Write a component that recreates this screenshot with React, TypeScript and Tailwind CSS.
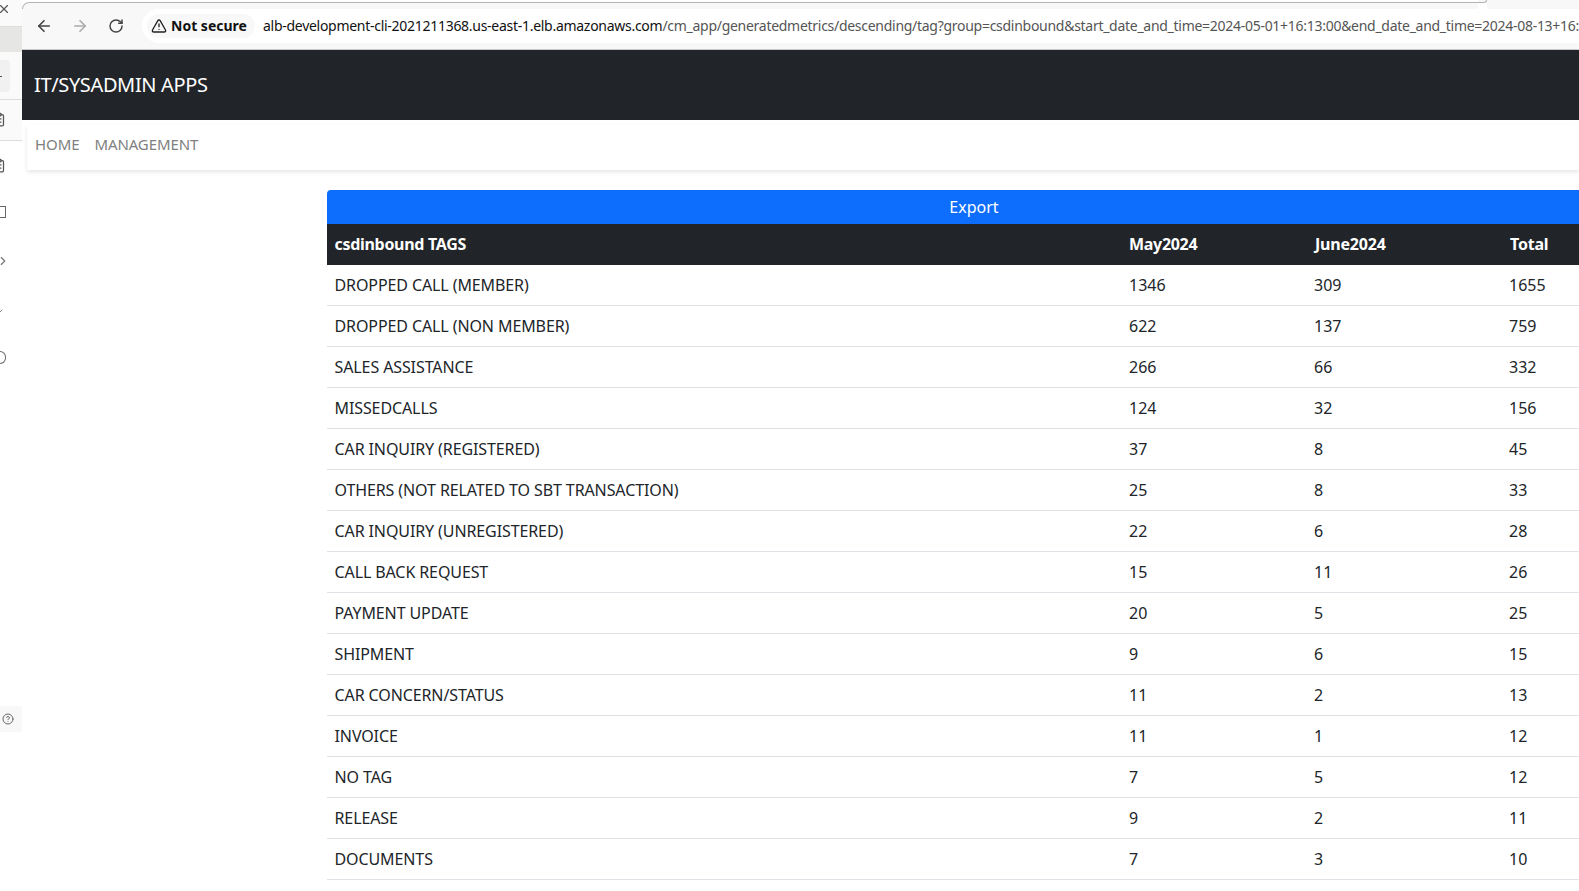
import React from "react";
import { ArrowLeft, ArrowRight, RotateCw, TriangleAlert, X, CircleHelp, ChevronRight, ClipboardList, Check } from "lucide-react";

const rows: [string, number, number, number][] = [
  ["DROPPED CALL (MEMBER)", 1346, 309, 1655],
  ["DROPPED CALL (NON MEMBER)", 622, 137, 759],
  ["SALES ASSISTANCE", 266, 66, 332],
  ["MISSEDCALLS", 124, 32, 156],
  ["CAR INQUIRY (REGISTERED)", 37, 8, 45],
  ["OTHERS (NOT RELATED TO SBT TRANSACTION)", 25, 8, 33],
  ["CAR INQUIRY (UNREGISTERED)", 22, 6, 28],
  ["CALL BACK REQUEST", 15, 11, 26],
  ["PAYMENT UPDATE", 20, 5, 25],
  ["SHIPMENT", 9, 6, 15],
  ["CAR CONCERN/STATUS", 11, 2, 13],
  ["INVOICE", 11, 1, 12],
  ["NO TAG", 7, 5, 12],
  ["RELEASE", 9, 2, 11],
  ["DOCUMENTS", 7, 3, 10],
];

function Sidebar() {
  return (
    <aside className="w-[22px] shrink-0 bg-white flex flex-col overflow-hidden">
      <div className="h-[27px] bg-[#fafafa] border-b border-[#dddddd] pt-[2px]">
        <X size={14} className="-ml-[3px] text-[#555555]" />
      </div>
      <div className="h-[25px] bg-[#e6e6e4]" />
      <div className="h-[48px] bg-[#fafafa] border-b border-[#dddddd] pt-[8px]">
        <div className="h-[32px] w-[10px] rounded-r bg-[#f1f1f1] flex items-center">
          <span className="block w-[2px] h-px bg-[#555555]" />
        </div>
      </div>
      <div className="h-[41px] bg-[#fafafa] border-b border-[#dddddd] pt-[12px]">
        <ClipboardList size={15} className="-ml-[9px] text-[#555555]" />
      </div>
      <div className="h-[46px] pt-[17px]">
        <ClipboardList size={15} className="-ml-[9px] text-[#555555]" />
      </div>
      <div className="h-[50px] pt-[19px]">
        <div className="w-[6px] h-[12px] border border-l-0 border-[#666666]" />
      </div>
      <div className="h-[50px] pt-[17px]">
        <ChevronRight size={14} className="-ml-[4px] text-[#777777]" />
      </div>
      <div className="h-[50px] pt-[20px]">
        <Check size={12} className="-ml-[8px] text-[#888888]" />
      </div>
      <div className="h-[369px] pt-[14px]">
        <div className="w-[6px] h-[13px] rounded-r-full border border-l-0 border-[#666666]" />
      </div>
      <div className="h-[26px] bg-[#f8f8f8] flex items-center pl-[2px]">
        <CircleHelp size={12} className="text-[#666666]" />
      </div>
    </aside>
  );
}

function BrowserBar() {
  return (
    <div className="h-[50px] bg-[#f8f8f8] border-b border-[#c8c8c8]">
      <div className="h-[9px] flex bg-white">
        <div className="w-[1456px] h-[7px] mt-[2px] rounded-tl-[8px] border-t border-l border-[#b4b4b4] bg-[#f8f8f8]" />
        <div className="w-[9px] h-[3px] rounded-br-[6px] border-b border-r border-[#b4b4b4] bg-[#f8f8f8]" />
        <div className="flex-1 bg-[#f8f8f8]" />
      </div>
      <div className="h-[40px] flex items-start">
        <div className="w-[44px] h-[34px] shrink-0 flex items-center justify-center">
          <ArrowLeft size={18} strokeWidth={2.2} className="text-[#444444]" />
        </div>
        <div className="w-[28px] h-[34px] shrink-0 flex items-center justify-center">
          <ArrowRight size={18} strokeWidth={2.2} className="text-[#aaaaaa]" />
        </div>
        <div className="w-[44px] h-[34px] shrink-0 flex items-center justify-center">
          <RotateCw size={16} strokeWidth={2.2} className="text-[#444444]" />
        </div>
        <div className="ml-[4px] flex-1 min-w-0 h-[34px] bg-white rounded-l-full flex items-center pl-[5px] overflow-hidden">
          <div className="flex items-center h-[24px] w-[108px] shrink-0 pl-[4px] rounded-full bg-[#f8f8f8] gap-[4px] whitespace-nowrap">
            <TriangleAlert size={16} strokeWidth={2} className="text-[#222222] shrink-0" />
            <span className="text-[14px] leading-[20px] pb-[1px] font-bold text-[#111111]">Not secure</span>
          </div>
          <div className="whitespace-nowrap text-[14px] leading-[20px] pb-[1px] pl-[8px]">
            <span className="text-[#111111] tracking-[-0.28px]">alb-development-cli-2021211368.us-east-1.elb.amazonaws.com</span>
            <span className="text-[#555555] tracking-[-0.28px]">/cm_app/generatedmetrics/descending/tag?group=csdinbound&amp;start_date_and_time=2024-05-01+16:13:00&amp;end_date_and_time=2024-08-13+16:13:00</span>
          </div>
        </div>
      </div>
    </div>
  );
}

export default function App() {
  return (
    <div className="h-[891px] w-[1579px] overflow-hidden flex bg-white font-['Noto_Sans',sans-serif] text-[16px] text-[#212529]">
      <Sidebar />
      <main className="flex-1 min-w-0">
        <BrowserBar />
        <header className="h-[70px] bg-[#212529] flex items-center pl-[12px]">
          <span className="text-[20px] text-white tracking-[-0.36px]">IT/SYSADMIN APPS</span>
        </header>
        <nav className="h-[45px] mt-[5px] ml-[5px] bg-white shadow-[0_2px_4px_rgba(0,0,0,0.1)] flex items-center pl-[8px] pb-[6px] gap-[15px] text-[15px] tracking-[-0.1px] text-[#808080]">
          <span>HOME</span>
          <span>MANAGEMENT</span>
        </nav>
        <section className="mt-[20px] ml-[305px] w-[1294px]">
          <button className="block w-full h-[34px] bg-[#0d6efd] text-white rounded-t-[4px]">Export</button>
          <table className="w-full table-fixed border-separate border-spacing-0">
            <colgroup>
              <col className="w-[794px]" />
              <col className="w-[185px]" />
              <col className="w-[195px]" />
              <col className="w-[120px]" />
            </colgroup>
            <thead>
              <tr className="h-[41px] bg-[#212529] text-white font-bold text-left">
                <th className="pl-[7.5px] pb-[2px] tracking-[-0.3px]">csdinbound TAGS</th>
                <th className="pl-[8px] pb-[2px] tracking-[-0.3px]">May2024</th>
                <th className="pl-[9px] pb-[2px] tracking-[-0.2px]">June2024</th>
                <th className="pl-[9px] pb-[2px] tracking-[-0.2px]">Total</th>
              </tr>
            </thead>
            <tbody>
              {rows.map(([name, may, june, total]) => (
                <tr key={name} className="h-[41px]">
                  <td className="pl-[7.5px] whitespace-nowrap tracking-[-0.1px] border-b border-[#dee2e6]">{name}</td>
                  <td className="pl-[8px] border-b border-[#dee2e6]">{may}</td>
                  <td className="pl-[8px] border-b border-[#dee2e6]">{june}</td>
                  <td className="pl-[8px] border-b border-[#dee2e6]">{total}</td>
                </tr>
              ))}
            </tbody>
          </table>
        </section>
      </main>
    </div>
  );
}
